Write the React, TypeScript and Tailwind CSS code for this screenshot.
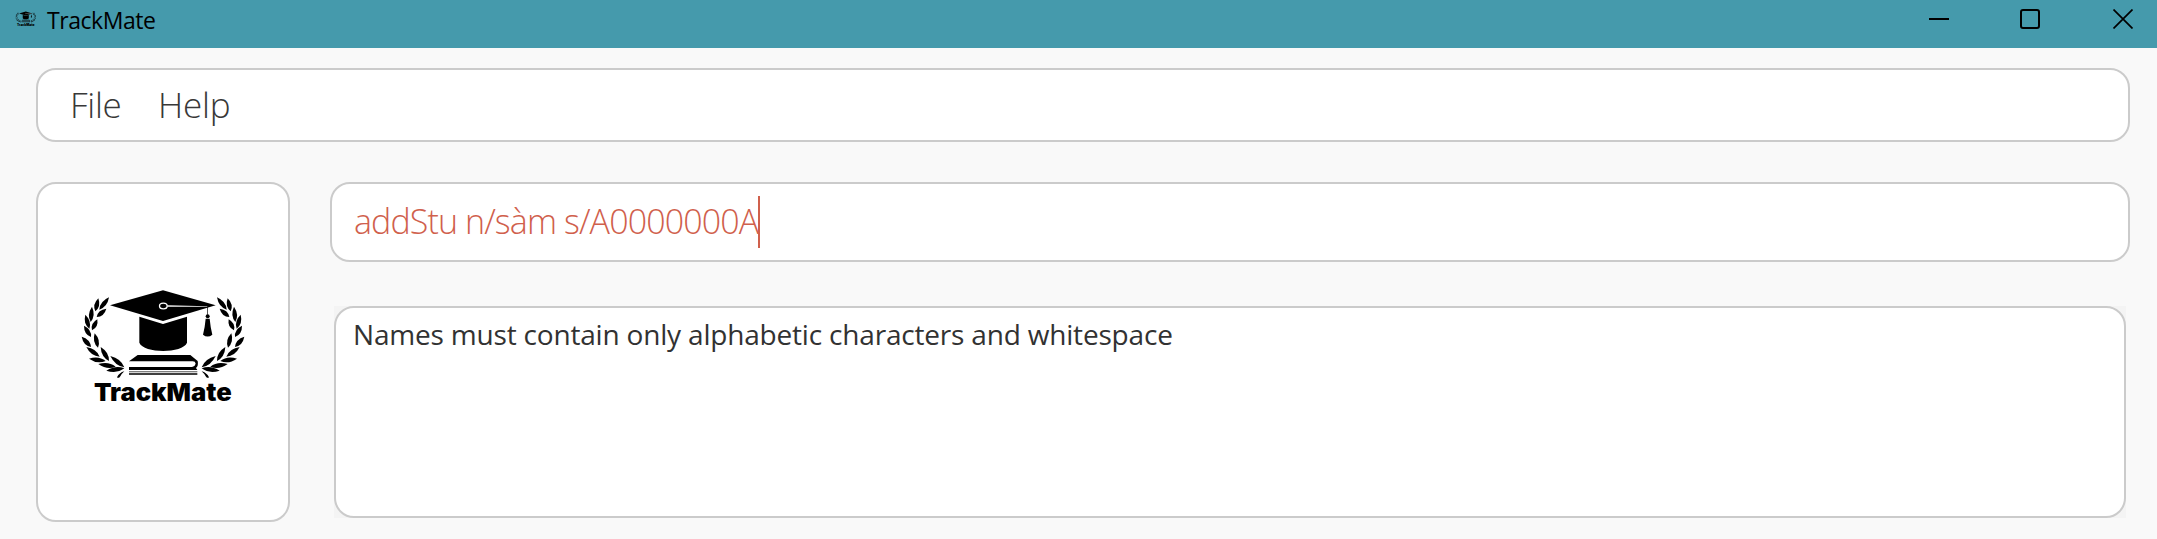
const LEAVES: [number, number, number, number][] = [
  [88, 89, 117, 52],
  [80, 111, 109, 86],
  [76, 94, 85, 55],
  [62, 126, 66, 80],
  [66, 151, 82, 118],
  [58, 146, 46, 104],
  [63, 171, 42, 137],
  [84, 203, 74, 160],
  [63, 201, 35, 170],
  [89, 230, 49, 201],
  [117, 243, 92, 201],
  [107, 243, 57, 236],
  [163, 262, 121, 228],
  [137, 260, 85, 252],
  [163, 265, 109, 272],
];

function leafPath([bx, by, tx, ty]: [number, number, number, number]) {
  const dx = tx - bx;
  const dy = ty - by;
  const len = Math.hypot(dx, dy);
  const nx = (-dy / len) * 14;
  const ny = (dx / len) * 14;
  const mx = bx + dx * 0.45;
  const my = by + dy * 0.45;
  return `M${bx} ${by}Q${mx + nx} ${my + ny} ${tx} ${ty}Q${mx - nx} ${my - ny} ${bx} ${by}Z`;
}

function Branch() {
  return (
    <>
      {LEAVES.map((leaf, i) => (
        <path key={i} d={leafPath(leaf)} />
      ))}
      <path d="M163 274Q148 278 141 292Q145 296 150 290Q154 282 163 274Z" />
    </>
  );
}

function Logo({ className }: { className: string }) {
  return (
    <svg viewBox="0 0 570 390" className={className} fill="#000">
      <Branch />
      <g transform="matrix(-1 0 0 1 558 0)">
        <Branch />
      </g>
      <path d="M120 76L279 31L437 76L279 123Z" />
      <path d="M208 110L279 132L351 110V188C338 221 221 221 208 188Z" />
      <ellipse cx="280" cy="78" rx="11.5" ry="8.5" fill="none" stroke="#fff" strokeWidth="4" />
      <path d="M292 75.5L412 79V80.5L292 80Z" fill="#fff" />
      <path d="M412 80H414V104H412Z" />
      <circle cx="413" cy="109" r="6" />
      <path d="M407 116H419Q421 140 427 164Q413 175 399 164Q405 140 407 116Z" />
      <path d="M177 244L203 225H361L383 243Q386 258 378 264L382 270H177V261H366Q376 258 377 251Q376 244 368 244Z" />
      <path d="M177 273.500H382V276.500H177Z" fill="#555" />
      <path d="M177 280H382V284H177Z" />
      <text
        x="72"
        y="364"
        textLength="413"
        lengthAdjust="spacingAndGlyphs"
        className="font-['Inter',sans-serif] text-[73px] font-black"
      >
        TrackMate
      </text>
    </svg>
  );
}

function WindowControls() {
  return (
    <div className="flex items-start pt-[9px] pr-[24px]">
      <svg className="mr-[71px] h-5 w-5" viewBox="0 0 20 20" fill="none" stroke="#000" strokeWidth="2">
        <path d="M0 10H20" />
      </svg>
      <svg className="mr-[73px] h-5 w-5" viewBox="0 0 20 20" fill="none" stroke="#000" strokeWidth="2">
        <rect x="1" y="1" width="18" height="18" rx="2" />
      </svg>
      <svg className="h-5 w-5" viewBox="0 0 20 20" fill="none" stroke="#000" strokeWidth="1.7">
        <path d="M0.500 0.500L19.500 19.500M19.500 0.500L0.500 19.500" />
      </svg>
    </div>
  );
}

export default function App() {
  return (
    <div className="flex h-[539px] w-[2157px] flex-col overflow-hidden bg-[#f9f9f9] font-['Open_Sans','Noto_Sans',sans-serif]">
      <header className="flex h-[48px] shrink-0 justify-between bg-[#459aac]">
        <div className="flex pl-[14px]">
          <Logo className="mt-[10px] h-[17px] w-[24px]" />
          <span className="ml-[9px] text-[23px] leading-[41px] tracking-[-0.45px] text-black">TrackMate</span>
        </div>
        <WindowControls />
      </header>

      <nav className="mt-5 ml-9 flex h-[74px] w-[2094px] shrink-0 rounded-[20px] border-2 border-[#cbcbcb] bg-white pl-[32px] text-[35px] leading-[69px] font-light text-[#383838]">
        <span className="w-[88px] tracking-[-0.3px]">File</span>
        <span className="tracking-[-0.2px]">Help</span>
      </nav>

      <main className="mt-10 ml-9 flex">
        <aside className="h-[340px] w-[254px] rounded-[20px] border-2 border-[#cbcbcb] bg-white pt-[96px] pl-[32px]">
          <Logo className="h-[130px] w-[190px]" />
        </aside>

        <div className="ml-10 flex flex-col">
          <div className="flex h-20 w-[1800px] rounded-[20px] border-2 border-[#cbcbcb] bg-white pl-[22px]">
            <span className="text-[34px] leading-[74px] font-light tracking-[-0.9px] text-[#d0604c]">
              addStu n/sàm s/A0000000A
            </span>
            <span className="mt-3 h-[52px] w-[2px] bg-[#d0604c]" />
          </div>
          <div className="mt-11 ml-1 w-[1792px] bg-[#f4f4f4]">
            <div className="h-[212px] rounded-[20px] border-2 border-[#cbcbcb] bg-white pl-[17px] text-[28px] leading-[52px] text-[#323232]">
              <span className="tracking-[-0.185px]">Names must contain only alphabetic characters and whitespace</span>
            </div>
          </div>
        </div>
      </main>
    </div>
  );
}
